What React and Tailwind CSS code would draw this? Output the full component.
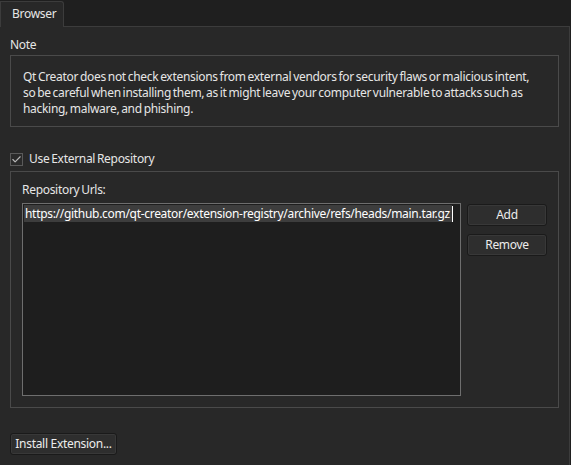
import { Check } from 'lucide-react';

const font = { fontFamily: '"Noto Sans", "Open Sans", sans-serif' };

const Button = ({ children, className = '' }) => (
  <button
    className={`h-[22px] rounded-[3px] border border-[#1a1a1a] bg-[#2e2e2e] text-[12px] text-[#ececec] shadow-[inset_0_0_0_1px_#383838] ${className}`}
  >
    {children}
  </button>
);

export default function App() {
  return (
    <div className="w-[571px] h-[465px] bg-[#1f1f1f] flex flex-col text-[#e6e6e6] text-[12px] tracking-[-0.3px] [word-spacing:-1px] overflow-hidden" style={font}>
      {/* Tab bar */}
      <div className="h-[26px] flex items-end shrink-0">
        <div className="relative -mb-px h-[26px] w-[64px] border border-b-0 border-[#3c3c3c] rounded-tr-[3px] bg-[#282828] pl-[11px] pt-[4px] leading-[16px]">
          Browser
        </div>
      </div>

      {/* Pane */}
      <div className="flex-1 w-[570px] border-t border-r border-[#3c3c3c] bg-[#282828] px-[10px] flex flex-col">
        <div className="pt-[10px] leading-[16px]">Note</div>
        <div className="mt-[2px] h-[72px] border border-[#4a4a4a] px-[12px] pt-[13px] leading-[16px] whitespace-nowrap">
          Qt Creator does not check extensions from external vendors for security flaws or malicious intent,
          <br />
          so be careful when installing them, as it might leave your computer vulnerable to attacks such as
          <br />
          hacking, malware, and phishing.
        </div>

        <label className="mt-[24px] flex items-center gap-[6px] leading-[16px]">
          <span className="w-[13px] h-[13px] border border-[#5a5a5a] bg-[#2a2a2a] flex items-center justify-center">
            <Check size={13} strokeWidth={2.5} className="text-[#b8b8b8]" />
          </span>
          Use External Repository
        </label>

        <div className="mt-[4px] h-[237px] border border-[#4a4a4a] px-[11px] pt-[10px] flex flex-col">
          <div className="leading-[16px]">Repository Urls:</div>
          <div className="mt-[5px] flex gap-[6px]">
            <div className="w-[440px] h-[193px] border border-[#6e6e6e] bg-[#1e1e1e] p-[1px]">
              <div className="flex items-center">
                <span className="bg-[#3d3d3d] text-white pl-[1px] pr-[2px] leading-[17px] whitespace-nowrap">
                  https://github.com/qt-creator/extension-registry/archive/refs/heads/main.tar.gz
                </span>
                <span className="w-px h-[16px] bg-white" />
              </div>
            </div>
            <div className="flex flex-col gap-[8px] pt-[1px]">
              <Button className="w-[80px]">Add</Button>
              <Button className="w-[80px]">Remove</Button>
            </div>
          </div>
        </div>

        <div className="mt-[25px]">
          <Button className="w-[107px]">Install Extension...</Button>
        </div>
      </div>
    </div>
  );
}
